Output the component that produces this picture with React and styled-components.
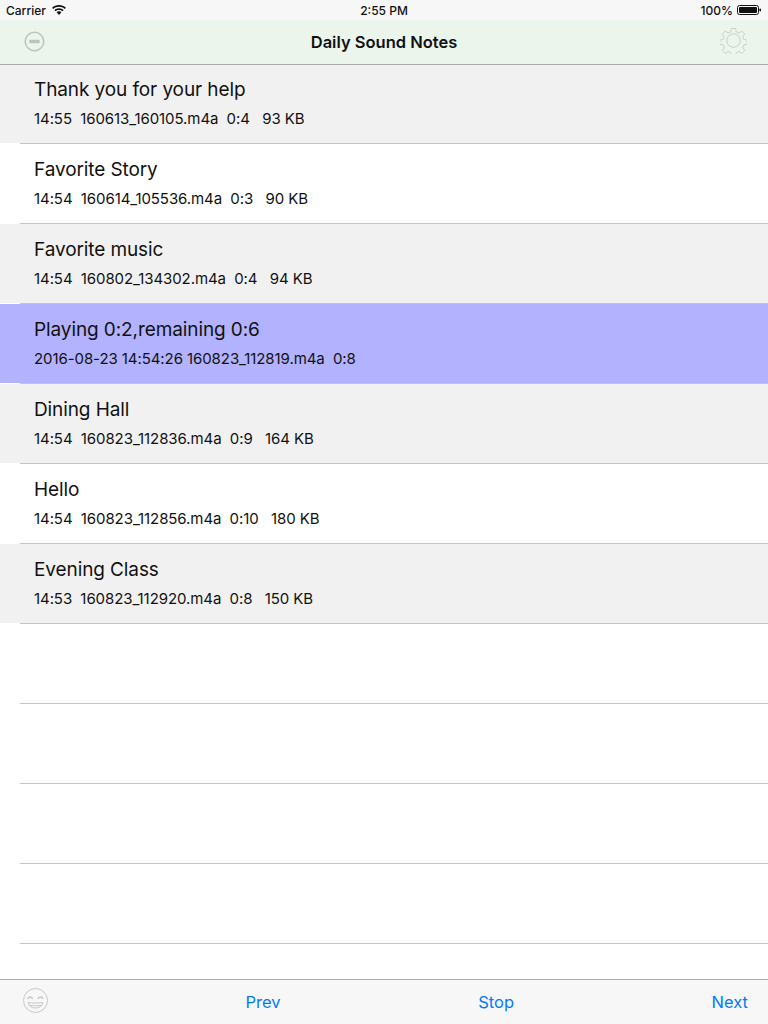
import React from "react";
import styled, { createGlobalStyle } from "styled-components";

const GlobalStyle = createGlobalStyle`
  html, body {
    margin: 0;
    padding: 0;
    background: #fff;
  }
  body {
    font-family: Inter, "Liberation Sans", sans-serif;
    color: #111;
  }
`;

const notes = [
  { title: "Thank you for your help", info: "14:55  160613_160105.m4a  0:4   93 KB", tone: "grey" },
  { title: "Favorite Story", info: "14:54  160614_105536.m4a  0:3   90 KB", tone: "white" },
  { title: "Favorite music", info: "14:54  160802_134302.m4a  0:4   94 KB", tone: "grey" },
  { title: "Playing 0:2,remaining 0:6", info: "2016-08-23 14:54:26 160823_112819.m4a  0:8", tone: "active" },
  { title: "Dining Hall", info: "14:54  160823_112836.m4a  0:9   164 KB", tone: "grey" },
  { title: "Hello", info: "14:54  160823_112856.m4a  0:10   180 KB", tone: "white" },
  { title: "Evening Class", info: "14:53  160823_112920.m4a  0:8   150 KB", tone: "grey" },
  { tone: "white" },
  { tone: "white" },
  { tone: "white" },
  { tone: "white" },
];

const tones = { grey: "#f1f1f1", white: "#ffffff", active: "#b2b2ff" };

const Page = styled.div`
  width: 768px;
  height: 1024px;
  display: flex;
  flex-direction: column;
  overflow: hidden;
`;

const StatusBar = styled.div`
  height: 20px;
  background: #f7f7f7;
  display: grid;
  grid-template-columns: 1fr auto 1fr;
  align-items: center;
  padding: 0 6px;
  font-size: 12px;
  font-weight: 500;
`;

const StatusLeft = styled.div`
  display: flex;
  align-items: center;
  gap: 6px;
`;

const StatusRight = styled.div`
  display: flex;
  align-items: center;
  justify-content: flex-end;
  gap: 4px;
`;

const NavBar = styled.header`
  height: 44px;
  box-sizing: content-box;
  margin-bottom: -1px;
  position: relative;
  z-index: 1;
  background: #ecf5ec;
  border-bottom: 1px solid #acacac;
  display: flex;
  align-items: center;
  justify-content: space-between;
  padding: 0 21px 0 24px;
`;

const NavTitle = styled.h1`
  margin: 0 0 0 3px;
  font-size: 16.5px;
  font-weight: 600;
  color: #111;
`;

const NavIcon = styled.svg`
  margin-bottom: ${(p) => p.$lift}px;
`;

const List = styled.main`
  flex: 1;
  min-height: 0;
`;

const Row = styled.div`
  height: 79px;
  box-sizing: border-box;
  padding: 13px 34px 0;
  background: ${(p) => tones[p.$tone]};
`;

const Separator = styled.div`
  height: 1px;
  margin-left: 20px;
  background: #c4c4c4;
`;

const Title = styled.div`
  font-size: 19px;
  letter-spacing: -0.1px;
  line-height: 26px;
  color: #111;
`;

const Info = styled.div`
  margin-top: 7px;
  font-size: 15px;
  letter-spacing: -0.08px;
  line-height: 18px;
  white-space: pre;
  color: #111;
`;

const BottomBar = styled.footer`
  height: 44px;
  background: #f7f7f7;
  border-top: 1px solid #acacac;
  display: flex;
  justify-content: space-between;
  align-items: center;
  padding: 0 20px 0 23px;
`;

const Action = styled.button`
  border: 0;
  padding: 0;
  background: none;
  font: inherit;
  font-size: 16.5px;
  color: #007aff;
`;

const MinusIcon = () => (
  <NavIcon $lift={2} width="21" height="21" viewBox="0 0 22 22" fill="none">
    <circle cx="11" cy="11" r="9.700" stroke="#bcc4bc" strokeWidth="1.6" />
    <rect x="5.500" y="9.200" width="11" height="3.600" rx="1" fill="#bcc4bc" />
  </NavIcon>
);

const GearIcon = () => (
  <NavIcon $lift={4} width="27" height="27" viewBox="0 0 28 28" fill="none" stroke="#c6cfc6" strokeWidth="1">
    <circle cx="14" cy="14" r="7" />
    <path d="M11.800 1.500h4.400l.7 3.600 2.600 1.100 3-2 3.100 3.100-2 3 1.100 2.600 3.600.7v4.400l-3.600.7-1.100 2.600 2 3-3.100 3.100-3-2-2.600 1.100-.7 3.600h-4.400l-.7-3.600-2.600-1.100-3 2-3.100-3.100 2-3-1.100-2.600-3.600-.7v-4.400l3.600-.7 1.100-2.600-2-3 3.100-3.100 3 2 2.600-1.100z" strokeLinejoin="round" />
  </NavIcon>
);

const SmileIcon = () => (
  <NavIcon $lift={3} width="25" height="25" viewBox="0 0 25 25" fill="none" stroke="#c8c8c8" strokeWidth="1">
    <circle cx="12.500" cy="12.500" r="12" />
    <path d="M4.500 11c1-2.700 4.200-2.700 5.200 0M15 11c1-2.700 4.200-2.700 5.200 0" strokeWidth="1.300" />
    <path d="M5 14.500c4.800.8 9.900.8 14.800 0-.5 3.400-3.200 5.500-7.400 5.500s-6.900-2.100-7.400-5.500zM6 17.300c4.200.6 8.400.6 12.800 0" />
  </NavIcon>
);

const WifiIcon = () => (
  <svg width="14" height="10" viewBox="0 0 14 10" fill="#111">
    <path d="M7 0c2.700 0 5.100 1 6.900 2.700l-1.100 1.200C11.300 2.500 9.300 1.700 7 1.700s-4.300.8-5.800 2.200L.1 2.700C1.900 1 4.300 0 7 0z" />
    <path d="M7 3.200c1.800 0 3.400.7 4.600 1.800l-1.100 1.200C9.600 5.400 8.400 4.900 7 4.900s-2.600.5-3.500 1.300L2.400 5C3.600 3.900 5.200 3.200 7 3.200z" />
    <path d="M7 6.300c1 0 1.800.4 2.400 1L7 10 4.600 7.300c.6-.6 1.400-1 2.400-1z" />
  </svg>
);

const BatteryIcon = () => (
  <svg width="25" height="10" viewBox="0 0 25 10">
    <rect x=".5" y=".5" width="21" height="9" rx="2" fill="none" stroke="#111" />
    <rect x="2" y="2" width="18" height="6" rx="1" fill="#111" />
    <rect x="22.500" y="3.500" width="1.500" height="3" rx=".7" fill="#111" />
  </svg>
);

export default function App() {
  return (
    <>
      <GlobalStyle />
      <Page>
        <StatusBar>
          <StatusLeft>
            <span>Carrier</span>
            <WifiIcon />
          </StatusLeft>
          <span>2:55 PM</span>
          <StatusRight>
            <span>100%</span>
            <BatteryIcon />
          </StatusRight>
        </StatusBar>
        <NavBar>
          <MinusIcon />
          <NavTitle>Daily Sound Notes</NavTitle>
          <GearIcon />
        </NavBar>
        <List>
          {notes.map((note, i) => (
            <div key={i}>
              <Row $tone={note.tone}>
                {note.title && <Title>{note.title}</Title>}
                {note.info && <Info>{note.info}</Info>}
              </Row>
              <Separator />
            </div>
          ))}
        </List>
        <BottomBar>
          <SmileIcon />
          <Action>Prev</Action>
          <Action>Stop</Action>
          <Action>Next</Action>
        </BottomBar>
      </Page>
    </>
  );
}
